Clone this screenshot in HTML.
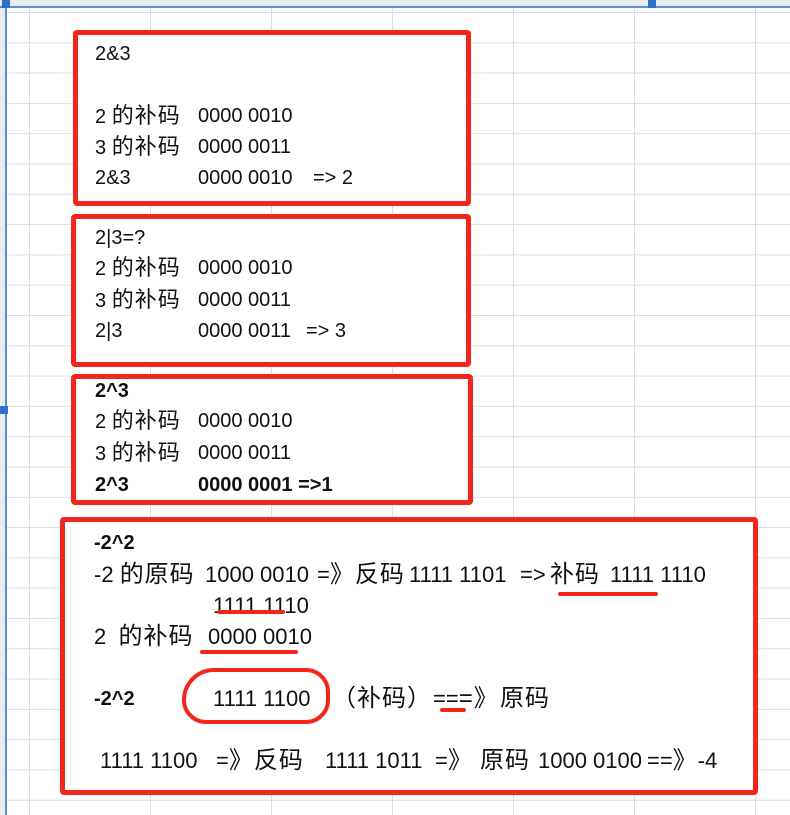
<!DOCTYPE html>
<html><head><meta charset="utf-8"><style>
body{margin:0;width:790px;height:815px;overflow:hidden;background:#fff;position:relative;font-family:"Liberation Sans","Noto Sans CJK SC",sans-serif;color:#111;}
.g{position:absolute;inset:0;background-image:linear-gradient(to right,#d8dde3 1px,transparent 1px),linear-gradient(to bottom,#d8dde3 1px,transparent 1px);background-size:121px 100%,100% 30.3px;background-position:29px 0,0 12px;}
.b{position:absolute;border:5px solid #f3261b;border-radius:4px;background:#fff;}
.t{position:absolute;font-size:20px;white-space:pre;line-height:22px;}
.t.L{font-size:22px;}
.c{font-size:22px;letter-spacing:1px}
.L .c{font-size:24px;letter-spacing:1px}
.bd{font-weight:bold}
.u{position:absolute;height:4px;background:#f3261b;border-radius:2px}
</style></head><body>
<div class="g"></div>
<div style="position:absolute;left:0;top:0;width:5px;height:815px;background:#e8ecf0;border-right:2px solid #5b8fd0"></div>
<div style="position:absolute;left:0;top:0;width:790px;height:6px;background:#e8ecf0;border-bottom:2px solid #5b8fd0"></div>
<div style="position:absolute;left:2px;top:0;width:8px;height:8px;background:#2f6fc9"></div>
<div style="position:absolute;left:648px;top:0;width:8px;height:8px;background:#2f6fc9"></div>
<div style="position:absolute;left:0;top:406px;width:8px;height:8px;background:#2f6fc9"></div>

<div class="b" style="left:73px;top:30px;width:388px;height:166px"></div>
<div class="t" style="left:95px;top:43px">2&amp;3</div>
<div class="t" style="left:95px;top:105px">2 <span class="c">的补码</span></div><div class="t" style="left:198px;top:105px">0000 0010</div>
<div class="t" style="left:95px;top:136px">3 <span class="c">的补码</span></div><div class="t" style="left:198px;top:136px">0000 0011</div>
<div class="t" style="left:95px;top:167px">2&amp;3</div><div class="t" style="left:198px;top:167px">0000 0010</div><div class="t" style="left:313px;top:167px">=&gt; 2</div>

<div class="b" style="left:71px;top:214px;width:390px;height:143px"></div>
<div class="t" style="left:95px;top:227px">2|3=?</div>
<div class="t" style="left:95px;top:257px">2 <span class="c">的补码</span></div><div class="t" style="left:198px;top:257px">0000 0010</div>
<div class="t" style="left:95px;top:289px">3 <span class="c">的补码</span></div><div class="t" style="left:198px;top:289px">0000 0011</div>
<div class="t" style="left:95px;top:320px">2|3</div><div class="t" style="left:198px;top:320px">0000 0011</div><div class="t" style="left:306px;top:320px">=&gt; 3</div>

<div class="b" style="left:71px;top:374px;width:392px;height:121px"></div>
<div class="t bd" style="left:95px;top:380px">2^3</div>
<div class="t" style="left:95px;top:410px">2 <span class="c">的补码</span></div><div class="t" style="left:198px;top:410px">0000 0010</div>
<div class="t" style="left:95px;top:442px">3 <span class="c">的补码</span></div><div class="t" style="left:198px;top:442px">0000 0011</div>
<div class="t bd" style="left:95px;top:474px">2^3</div><div class="t bd" style="left:198px;top:474px">0000 0001 =&gt;1</div>

<div class="b" style="left:60px;top:517px;width:688px;height:268px"></div>
<div class="t L bd" style="left:94px;top:532px;font-size:20px">-2^2</div>
<div class="t L" style="left:94px;top:564px">-2 <span class="c">的原码</span></div>
<div class="t L" style="left:205px;top:564px">1000 0010</div>
<div class="t L" style="left:317px;top:564px">=<span class="c">》反码</span></div>
<div class="t L" style="left:409px;top:564px">1111 1101</div>
<div class="t L" style="left:520px;top:564px">=&gt;</div>
<div class="t L" style="left:550px;top:564px"><span class="c">补码</span></div>
<div class="t L" style="left:610px;top:564px">1111 1110</div>
<div class="u" style="left:558px;top:592px;width:100px"></div>
<div class="t L" style="left:213px;top:595px">1111 1110</div>
<div class="u" style="left:217px;top:610px;width:68px"></div>
<div class="t L" style="left:94px;top:626px">2  <span class="c">的补码</span></div>
<div class="t L" style="left:208px;top:626px">0000 0010</div>
<div class="u" style="left:200px;top:650px;width:98px"></div>
<div class="t L bd" style="left:94px;top:688px;font-size:20px">-2^2</div>
<div class="t L" style="left:213px;top:688px">1111 1100</div>
<div class="t L" style="left:332px;top:688px"><span class="c">（补码）</span></div>
<div class="t L" style="left:433px;top:688px">==<span class="c">=》</span></div>
<div class="t L" style="left:500px;top:688px"><span class="c">原码</span></div>
<div style="position:absolute;left:182px;top:668px;width:140px;height:48px;border:4px solid #f3261b;border-radius:40px 30px 30px 30px"></div>
<div class="u" style="left:440px;top:708px;width:26px"></div>
<div class="t L" style="left:100px;top:750px">1111 1100</div>
<div class="t L" style="left:216px;top:750px">=<span class="c">》反码</span></div>
<div class="t L" style="left:325px;top:750px">1111 1011</div>
<div class="t L" style="left:435px;top:750px">=<span class="c">》</span></div>
<div class="t L" style="left:480px;top:750px"><span class="c">原码</span></div>
<div class="t L" style="left:538px;top:750px">1000 0100</div>
<div class="t L" style="left:647px;top:750px">==<span class="c">》</span>-4</div>
</body></html>
